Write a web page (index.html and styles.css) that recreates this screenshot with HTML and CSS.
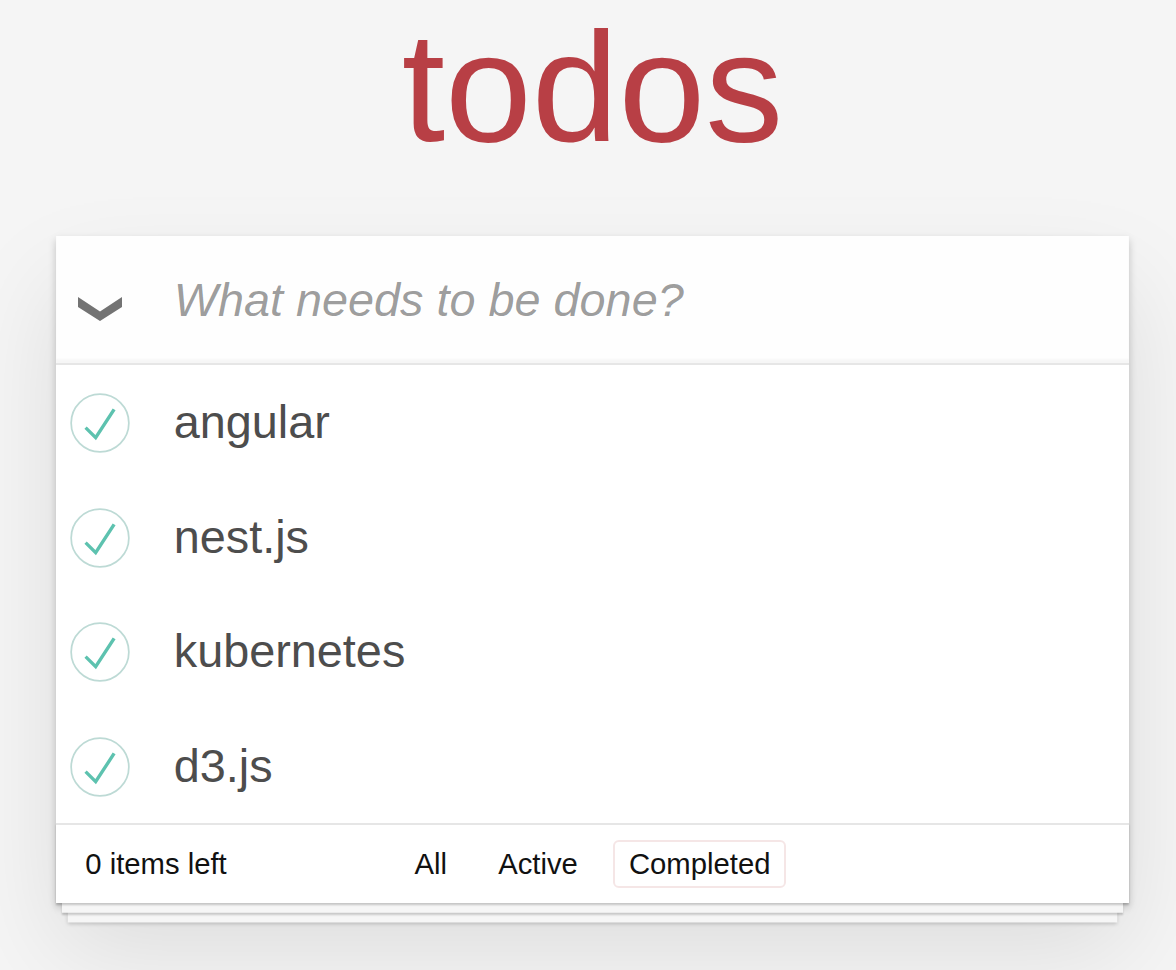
FILE: index.html
```html
<!DOCTYPE html>
<html lang="en">
<head>
<meta charset="utf-8">
<title>todos</title>
<link rel="stylesheet" href="styles.css">
</head>
<body>
<div class="page">
  <h1 class="title">todos</h1>
  <section class="todoapp">
    <header class="entry">
      <span class="toggle-all">
        <svg class="chevron" viewBox="0 0 44 24" width="44" height="24"><polygon points="0,0 22,14.5 44,0 44,10 22,24 0,10" fill="#737373"/></svg>
      </span>
      <input class="new-todo" type="text" placeholder="What needs to be done?">
    </header>
    <ul class="todo-list">
      <li class="todo">
        <svg class="check" viewBox="-2 -2 104 104" width="60" height="60"><circle cx="50" cy="50" r="50" fill="none" stroke="#bddad5" stroke-width="3"/><path fill="#5dc2af" d="M72 25L42 71 27 56l-4 4 20 20 34-52z"/></svg>
        <label class="todo-label">angular</label>
      </li>
      <li class="todo">
        <svg class="check" viewBox="-2 -2 104 104" width="60" height="60"><circle cx="50" cy="50" r="50" fill="none" stroke="#bddad5" stroke-width="3"/><path fill="#5dc2af" d="M72 25L42 71 27 56l-4 4 20 20 34-52z"/></svg>
        <label class="todo-label">nest.js</label>
      </li>
      <li class="todo">
        <svg class="check" viewBox="-2 -2 104 104" width="60" height="60"><circle cx="50" cy="50" r="50" fill="none" stroke="#bddad5" stroke-width="3"/><path fill="#5dc2af" d="M72 25L42 71 27 56l-4 4 20 20 34-52z"/></svg>
        <label class="todo-label">kubernetes</label>
      </li>
      <li class="todo">
        <svg class="check" viewBox="-2 -2 104 104" width="60" height="60"><circle cx="50" cy="50" r="50" fill="none" stroke="#bddad5" stroke-width="3"/><path fill="#5dc2af" d="M72 25L42 71 27 56l-4 4 20 20 34-52z"/></svg>
        <label class="todo-label">d3.js</label>
      </li>
    </ul>
    <footer class="footer">
      <span class="todo-count">0 items left</span>
      <ul class="filters">
        <li><a href="#/">All</a></li>
        <li><a href="#/active">Active</a></li>
        <li><a class="selected" href="#/completed">Completed</a></li>
      </ul>
      <span class="spacer"></span>
    </footer>
  </section>
</div>
</body>
</html>
```

FILE: styles.css
```css
html, body {
  margin: 0;
  padding: 0;
}

html {
  background: #f5f5f5;
}

body {
  background: #f5f5f5;
  color: #111111;
  font-family: "Liberation Sans", Arial, sans-serif;
  font-size: 27px;
  min-height: 100vh;
}

.page {
  width: 1073px;
  margin-left: 56px;
}

.title {
  margin: 0;
  padding-top: 9px;
  font-size: 156px;
  line-height: 156px;
  font-weight: normal;
  text-align: center;
  color: #b83f45;
}

.todoapp {
  margin-top: 71px;
  background: #fff;
  box-shadow: 0 3.9px 7.8px 0 rgba(0, 0, 0, 0.2),
              0 48.75px 97.5px 0 rgba(0, 0, 0, 0.1);
}

.entry {
  display: flex;
  height: 126.75px;
  background: rgba(0, 0, 0, 0.003);
  box-shadow: inset 0 -3.9px 1.95px rgba(0, 0, 0, 0.03);
}

.toggle-all {
  flex: none;
  width: 87.75px;
  display: flex;
  align-items: center;
  justify-content: center;
  padding-top: 20px;
  box-sizing: border-box;
}

.chevron {
  display: block;
}

.new-todo {
  flex: 1;
  min-width: 0;
  margin: 0;
  border: none;
  outline: none;
  background: transparent;
  padding: 2px 0 0 30px;
  height: 126.75px;
  box-sizing: border-box;
  font-family: inherit;
  font-size: 46.8px;
  color: #4d4d4d;
}

.new-todo::placeholder {
  font-style: italic;
  color: rgba(0, 0, 0, 0.4);
}

.todo-list {
  margin: 0;
  padding: 0;
  list-style: none;
  border-top: 2px solid #e6e6e6;
}

.todo {
  display: flex;
  align-items: center;
  font-size: 46.8px;
}

.check {
  flex: none;
  display: block;
  margin-left: 14px;
  margin-right: 43.75px;
  position: relative;
  top: 1px;
}

.todo-label {
  padding: 29.25px 0;
  line-height: 1.2;
  color: #4d4d4d;
}

.footer {
  display: grid;
  grid-template-columns: 1fr auto 1fr;
  align-items: start;
  height: 39px;
  padding: 19.5px 29.25px;
  border-top: 2px solid #e6e6e6;
  font-size: 29.25px;
  line-height: 38.2px;
  color: #111111;
  background: #fff;
  box-shadow: 0 1.95px 1.95px rgba(0, 0, 0, 0.2),
              0 15.6px 0 -5.85px #f6f6f6,
              0 17.55px 1.95px -5.85px rgba(0, 0, 0, 0.2),
              0 31.2px 0 -11.7px #f6f6f6,
              0 33.15px 3.9px -11.7px rgba(0, 0, 0, 0.2);
}

.filters {
  margin: 0;
  padding: 0;
  list-style: none;
  white-space: nowrap;
}

.filters li {
  display: inline;
}

.filters a {
  color: inherit;
  text-decoration: none;
  margin: 5.85px;
  padding: 5.85px 13.65px;
  border: 2px solid transparent;
  border-radius: 5.85px;
}

.filters a.selected {
  border-color: rgba(175, 47, 47, 0.12);
}
```
